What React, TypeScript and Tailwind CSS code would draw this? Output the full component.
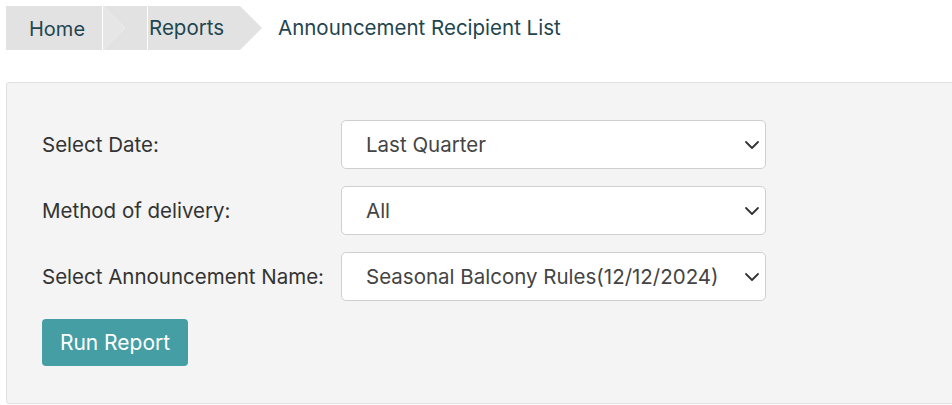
import React from 'react';
import { ChevronDown } from 'lucide-react';

const fields = [
  { label: 'Select Date:', value: 'Last Quarter' },
  { label: 'Method of delivery:', value: 'All' },
  { label: 'Select Announcement Name:', value: 'Seasonal Balcony Rules(12/12/2024)' },
];

const App: React.FC = () => {
  return (
    <div className="w-[952px] h-[405px] overflow-hidden bg-white" style={{ fontFamily: 'Inter, "Noto Sans", sans-serif' }}>
      {/* Breadcrumb */}
      <div className="flex items-stretch h-[44px] mt-[6px] ml-[6px]">
        <div className="w-[96px] bg-[#e2e2e2] flex items-center pl-[23px] pt-[1px] text-[20px] text-[#1e4650]">Home</div>
        <div className="w-[1px] bg-white" />
        <div className="w-[44px] bg-[#e2e2e2] relative">
          <svg className="absolute inset-0" width="44" height="44" viewBox="0 0 44 44">
            <polyline points="0,0 22,22 0,44" fill="#e6e6e6" stroke="#ececec" strokeWidth="1" />
          </svg>
        </div>
        <div className="w-[1px] bg-white" />
        <div className="w-[92px] bg-[#e2e2e2] flex items-center pl-[1px] pt-[1px] text-[20.5px] text-[#1e4650]">Reports</div>
        <svg width="22" height="44" viewBox="0 0 22 44">
          <polygon points="0,0 22,22 0,44" fill="#e2e2e2" />
        </svg>
        <div className="flex items-center pl-[16px] pt-[1px] text-[20.5px] text-[#1e4650]">Announcement Recipient List</div>
      </div>

      {/* Panel */}
      <div className="mt-[32px] ml-[6px] w-[960px] h-[322px] bg-[#f4f4f4] border border-[#e1e1e1] rounded-[3px] pl-[35px] pt-[37px]">
        <div className="flex flex-col gap-[17px]">
          {fields.map((f) => (
            <div key={f.label} className="flex items-center">
              <div className="w-[299px] pt-[2px] text-[20.5px] text-[#333333]">{f.label}</div>
              <div className="w-[425px] h-[49px] bg-white border border-[#cfcfcf] rounded-[5px] flex items-center justify-between pl-[24px] pr-[1px] text-[20.5px] text-[#444444]">
                <span className="pt-[2px]">{f.value}</span>
                <ChevronDown className="w-[24px] h-[24px] text-[#333]" strokeWidth={1.8} />
              </div>
            </div>
          ))}
        </div>
        <button className="mt-[18px] w-[146px] h-[47px] bg-[#459ea3] rounded-[4px] text-white text-[21px]">Run Report</button>
      </div>
    </div>
  );
};

export default App;
